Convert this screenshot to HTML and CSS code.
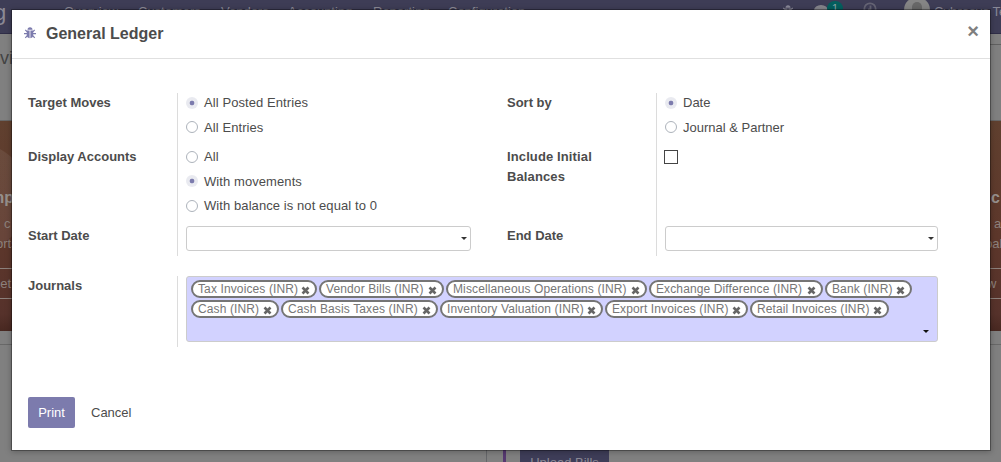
FILE: index.html
```html
<!DOCTYPE html>
<html lang="en">
<head>
<meta charset="utf-8">
<title>General Ledger</title>
<link rel="stylesheet" href="styles.css">
</head>
<body>
<svg class="defs" width="0" height="0" aria-hidden="true">
  <symbol id="bug" viewBox="0 0 12 12">
    <path d="M3.500 2.700a2.500 2.500 0 0 1 5 0z M2.800 3.400h2.800v7.800C3.800 11 2.800 9.700 2.800 8z M6.400 3.400h2.800V8c0 1.700-1 3-2.800 3.200z"/>
    <path d="M3.200 4.800 1.300 2.800M8.800 4.800 10.700 2.800M3 6.600H0M9 6.600h3M3.300 8.600 1.300 10.900M8.700 8.600l2 2.300" fill="none" stroke="currentColor" stroke-width="1.200"/>
  </symbol>
  <symbol id="times" viewBox="0 0 9 9"><path d="M1.500 1.500l6 6M7.500 1.500l-6 6" fill="none" stroke="currentColor" stroke-width="2.600"/></symbol>
</svg>

<div class="page">
  <header class="navbar">
    <div class="brand">g</div>
    <nav class="menu"><span class="m1">Overview</span><span class="m2">Customers</span><span class="m3">Vendors</span><span class="m4">Accounting</span><span class="m5">Reporting</span><span>Configuration</span></nav>
    <div class="systray">
      <svg class="tray-bug" width="12" height="12"><use href="#bug"/></svg>
      <span class="chat"></span><span class="count">1</span>
      <svg class="clock" width="14" height="14" viewBox="0 0 14 14"><circle cx="7" cy="7" r="5.700"/><path d="M7.500 3.500v4H5"/></svg>
      <span class="avatar"><i></i></span>
      <span class="user">Cybrosys Te</span>
    </div>
  </header>
  <div class="control"><span class="crumb">vi</span><span class="search"></span></div>
  <section class="banner">
    <div class="step left"><b>mp</b><p class="in">c</p><p>orts</p><div class="step-btn"><span>Let</span></div></div>
    <div class="step right"><b>c</b><p class="in">a</p><p>bal</p><div class="step-btn">w</div></div>
  </section>
  <div class="gap"></div>
  <section class="board"><div class="card"><span class="upload">Upload Bills</span></div></section>
</div>

<main class="modal">
  <header class="modal-head">
    <svg class="debug" width="12" height="12"><use href="#bug"/></svg>
    <h1>General Ledger</h1>
    <span class="close">×</span>
  </header>
  <div class="modal-body">
    <div class="groups">
      <div class="group first">
        <div class="label">Target Moves</div>
        <div class="field"><label class="radio on"><i></i>All Posted Entries</label><label class="radio"><i></i>All Entries</label></div>
        <div class="label">Display Accounts</div>
        <div class="field"><label class="radio"><i></i>All</label><label class="radio on"><i></i>With movements</label><label class="radio"><i></i>With balance is not equal to 0</label></div>
        <div class="label">Start Date</div>
        <div class="field"><div class="date"><span class="caret"></span></div></div>
      </div>
      <div class="group second">
        <div class="label">Sort by</div>
        <div class="field"><label class="radio on"><i></i>Date</label><label class="radio"><i></i>Journal &amp; Partner</label></div>
        <div class="label spaced">Include Initial Balances</div>
        <div class="field"><span class="check"></span></div>
        <div class="label">End Date</div>
        <div class="field"><div class="date"><span class="caret"></span></div></div>
      </div>
    </div>
    <div class="journals">
      <div class="label">Journals</div>
      <div class="field">
        <div class="tags">
          <span class="tag" style="width:126px">Tax Invoices (INR)<svg><use href="#times"/></svg></span>
          <span class="tag" style="width:125px">Vendor Bills (INR)<svg><use href="#times"/></svg></span>
          <span class="tag" style="width:201px">Miscellaneous Operations (INR)<svg><use href="#times"/></svg></span>
          <span class="tag" style="width:174px">Exchange Difference (INR)<svg><use href="#times"/></svg></span>
          <span class="tag" style="width:87px">Bank (INR)<svg><use href="#times"/></svg></span>
          <span class="tag" style="width:88px">Cash (INR)<svg><use href="#times"/></svg></span>
          <span class="tag" style="width:157px">Cash Basis Taxes (INR)<svg><use href="#times"/></svg></span>
          <span class="tag" style="width:163px">Inventory Valuation (INR)<svg><use href="#times"/></svg></span>
          <span class="tag" style="width:143px">Export Invoices (INR)<svg><use href="#times"/></svg></span>
          <span class="tag" style="width:139px">Retail Invoices (INR)<svg><use href="#times"/></svg></span>
          <span class="caret"></span>
        </div>
      </div>
    </div>
    <footer class="actions"><button class="print">Print</button><button class="cancel">Cancel</button></footer>
  </div>
</main>
</body>
</html>
```

FILE: styles.css
```css
* { box-sizing: border-box; }
body { margin: 0; width: 1001px; height: 462px; overflow: hidden; font: 13px/20px "Liberation Sans", Arial, sans-serif; color: #4c4c4c; }
p, h1 { margin: 0; }
svg { fill: currentColor; flex: none; }
.defs { position: absolute; }
.page { height: 462px; background: #808080; overflow: hidden; color: #8b8995; }

.navbar { display: flex; height: 34px; background: #3e3d56; border-bottom: 1px solid #302e48; white-space: nowrap; }
.brand { width: 64px; margin-left: -6px; padding-top: 1px; font-size: 22px; line-height: 24px; }
.menu { display: flex; padding-left: 6px; line-height: 24px; }
.m1 { width: 74px; }
.m2 { width: 83px; }
.m3 { width: 67px; }
.m4 { width: 85px; }
.m5 { width: 75px; }
.systray { display: flex; margin-left: auto; width: 219px; line-height: 24px; color: #898897; }
.systray > * { flex: none; }
.tray-bug { margin-top: 5px; }
.chat { width: 14px; height: 11px; margin: 5px 0 0 20px; border-radius: 50%; background: #85858c; }
.count { width: 16px; height: 15px; margin: 1px 0 0 -1px; border-radius: 8px; background: #045f5e; color: #8ba5a8; font-size: 11px; line-height: 14px; text-align: center; }
.clock { margin: 2px 0 0 20px; fill: none; stroke: #656474; stroke-width: 1.800; }
.avatar { width: 26px; height: 26px; margin: -3px 0 0 27px; border-radius: 50%; background: #858585; padding: 5px 8px; }
.avatar i { display: block; width: 10px; height: 14px; border-radius: 5px; background: #686868; }
.user { margin-left: 4px; letter-spacing: .1px; }

.control { display: flex; justify-content: space-between; height: 87px; border-bottom: 1px solid #686868; }
.crumb { padding-top: 14px; font-size: 18px; color: #444; }
.search { width: 100px; height: 58px; margin-top: 10px; border-top: 1px solid #606060; }
.banner { display: flex; justify-content: space-between; height: 210px; padding-top: 66px; background: radial-gradient(circle at -26px 76px, rgba(255,255,255,.07) 54px, transparent 55px), linear-gradient(#60402f, #5d372b 55%, #56322b 92%, #482821); color: #8d817c; }
.step { width: 16px; white-space: nowrap; }
.step b { display: block; font-size: 16px; line-height: 22px; color: #96908c; }
.step p { height: 20px; margin-top: 1px; margin-bottom: -1px; padding-top: 4px; line-height: 20px; }
.step-btn { height: 31px; margin-top: 19px; border: 1px solid #8d817c; border-width: 1px 0; line-height: 29px; }
.left { margin-left: -4px; }
.left b { margin-left: -6px; }
.left .in { padding-left: 8px; }
.left .step-btn span { margin-left: -3px; }
.right b { padding-left: 6px; }
.right .in { padding-left: 9px; }
.right .step-btn { padding-left: 2px; }
.gap { height: 14px; border-bottom: 1px solid #686868; }
.board { display: flex; height: 117px; padding-left: 486px; }
.card { width: 515px; height: 117px; padding: 103px 0 0 16px; border-left: 1px solid #656669; background: linear-gradient(#563970, #563970) 16px 0 / 3px 100% no-repeat; }
.upload { display: block; width: 89px; height: 30px; margin-left: 17px; background: #3e3d58; text-align: center; line-height: 29px; }

.modal { position: absolute; left: 11px; top: 9px; width: 980px; height: 442px; border: 1px solid rgba(0,0,0,.3); background: #fff; background-clip: padding-box; box-shadow: 0 1px 6px rgba(0,0,0,.25); }
.modal-head { display: flex; align-items: center; height: 49px; padding: 0 11px 0 12px; border-bottom: 1px solid #e0e0e0; }
.debug { color: #7c7bad; margin-top: -3px; }
h1 { margin-left: 10px; font-size: 16px; line-height: 20px; }
.close { margin: -6px 0 0 auto; font-size: 20px; font-weight: bold; color: #7f7f7f; }
.modal-body { padding: 34px 52px 0 16px; }
.groups { display: flex; }
.group { display: grid; grid-template-columns: 149px 294px; grid-template-rows: 54px 79px 30px; width: 479px; }
.first .radio { letter-spacing: .08px; }
.second { grid-template-columns: 149px 282px; width: 431px; }
.label { font-weight: bold; padding-right: 30px; }
.spaced { letter-spacing: .12px; }
.field { border-left: 1px solid #dcdcdc; padding-left: 8px; }
.radio { display: flex; align-items: center; height: 20px; margin-bottom: 4.600px; }
.radio i { width: 12px; height: 12px; margin-right: 6px; border: 1px solid #adb3bb; border-radius: 50%; }
.radio:nth-child(2) i { margin-top: -2px; }
.radio.on i { border: 0; background: radial-gradient(circle, #7c7bad 2px, #e9eaf0 2.700px); }
.check { display: block; width: 14px; height: 14px; margin: 3px 0 0 -1px; border: 1px solid #444; }
.date { display: flex; justify-content: flex-end; align-items: center; height: 25px; border: 1px solid #ccc; border-radius: 3px; padding-right: 3px; }
.second .date { width: 273px; }
.caret { width: 6px; height: 3px; background: #333; clip-path: polygon(0 0, 100% 0, 50% 100%); }
.journals { display: grid; grid-template-columns: 149px 761px; height: 71px; margin-top: 20px; }
.tags { position: relative; display: flex; flex-wrap: wrap; align-content: flex-start; gap: 2px; height: 66px; padding: 3px 4px; border: 1px solid #ccc; border-radius: 3px; background: #d2d2ff; }
.tag { display: flex; height: 18px; padding: 0 5px; border: 2px solid #757575; border-radius: 9px; background: #fff; color: #777; font-size: 12px; line-height: 14px; letter-spacing: .12px; white-space: nowrap; }
.tag svg { width: 9px; height: 9px; margin: 4px 0 0 auto; color: #666; }
.tags .caret { position: absolute; right: 8px; bottom: 8px; background: #111; }
.actions { display: flex; margin-top: 50px; }
.actions button { height: 31px; border: 0; border-radius: 2px; padding: 0; font: inherit; }
.print { width: 47px; background: #7c7bad; color: #fff; }
.cancel { margin-left: 16px; background: none; color: #4c4c4c; }
```
